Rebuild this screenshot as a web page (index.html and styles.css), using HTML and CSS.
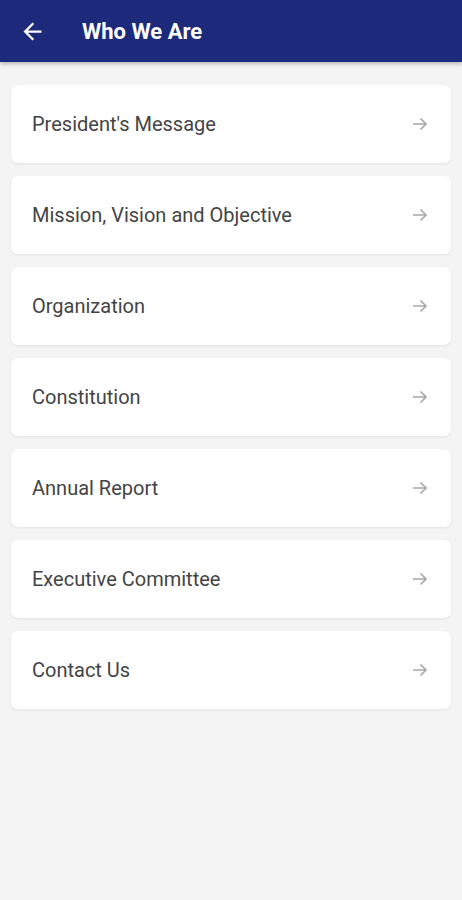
FILE: index.html
```html
<!DOCTYPE html>
<html>
<head>
<meta charset="utf-8">
<link rel="stylesheet" href="styles.css">
</head>
<body>
<header class="appbar">
  <svg class="back" width="27" height="27" viewBox="0 0 24 24"><path d="M20 11H7.83l5.59-5.59L12 4l-8 8 8 8 1.41-1.41L7.83 13H20v-2z" fill="#fff"/></svg>
  <h1 class="title">Who We Are</h1>
</header>
<main class="list">
  <div class="card"><span class="label">President's Message</span><svg class="arrow" width="16" height="16" viewBox="0 0 16 16"><path d="M1 8h13M8.5 2.5 14 8l-5.5 5.5" fill="none" stroke="#a8a8a8" stroke-width="1.7"/></svg></div>
  <div class="card"><span class="label">Mission, Vision and Objective</span><svg class="arrow" width="16" height="16" viewBox="0 0 16 16"><path d="M1 8h13M8.5 2.5 14 8l-5.5 5.5" fill="none" stroke="#a8a8a8" stroke-width="1.7"/></svg></div>
  <div class="card"><span class="label">Organization</span><svg class="arrow" width="16" height="16" viewBox="0 0 16 16"><path d="M1 8h13M8.5 2.5 14 8l-5.5 5.5" fill="none" stroke="#a8a8a8" stroke-width="1.7"/></svg></div>
  <div class="card"><span class="label">Constitution</span><svg class="arrow" width="16" height="16" viewBox="0 0 16 16"><path d="M1 8h13M8.5 2.5 14 8l-5.5 5.5" fill="none" stroke="#a8a8a8" stroke-width="1.7"/></svg></div>
  <div class="card"><span class="label">Annual Report</span><svg class="arrow" width="16" height="16" viewBox="0 0 16 16"><path d="M1 8h13M8.5 2.5 14 8l-5.5 5.5" fill="none" stroke="#a8a8a8" stroke-width="1.7"/></svg></div>
  <div class="card"><span class="label">Executive Committee</span><svg class="arrow" width="16" height="16" viewBox="0 0 16 16"><path d="M1 8h13M8.5 2.5 14 8l-5.5 5.5" fill="none" stroke="#a8a8a8" stroke-width="1.7"/></svg></div>
  <div class="card"><span class="label">Contact Us</span><svg class="arrow" width="16" height="16" viewBox="0 0 16 16"><path d="M1 8h13M8.5 2.5 14 8l-5.5 5.5" fill="none" stroke="#a8a8a8" stroke-width="1.7"/></svg></div>
</main>
</body>
</html>
```
FILE: styles.css
```css
html, body {
  margin: 0;
  padding: 0;
  background: #f4f4f4;
  font-family: Roboto, "Liberation Sans", sans-serif;
}
body {
  min-height: 900px;
}
.appbar {
  height: 62px;
  background: #1d2a7b;
  display: flex;
  align-items: center;
  padding-left: 19px;
  box-sizing: border-box;
  box-shadow: 0 2px 4px rgba(0,0,0,0.25);
}
.back {
  display: block;
}
.title {
  margin: 0 0 0 36px;
  color: #fff;
  font-size: 22px;
  font-weight: 700;
}
.list {
  display: flex;
  flex-direction: column;
  gap: 13px;
  padding: 23px 11px 0 11px;
}
.card {
  height: 78px;
  background: #fff;
  border-radius: 7px;
  box-shadow: 0 1px 3px rgba(0,0,0,0.08);
  display: flex;
  align-items: center;
  justify-content: space-between;
  padding: 0 23px 0 21px;
  box-sizing: border-box;
}
.label {
  font-size: 20px;
  color: #444;
}
.arrow {
  display: block;
}
```
